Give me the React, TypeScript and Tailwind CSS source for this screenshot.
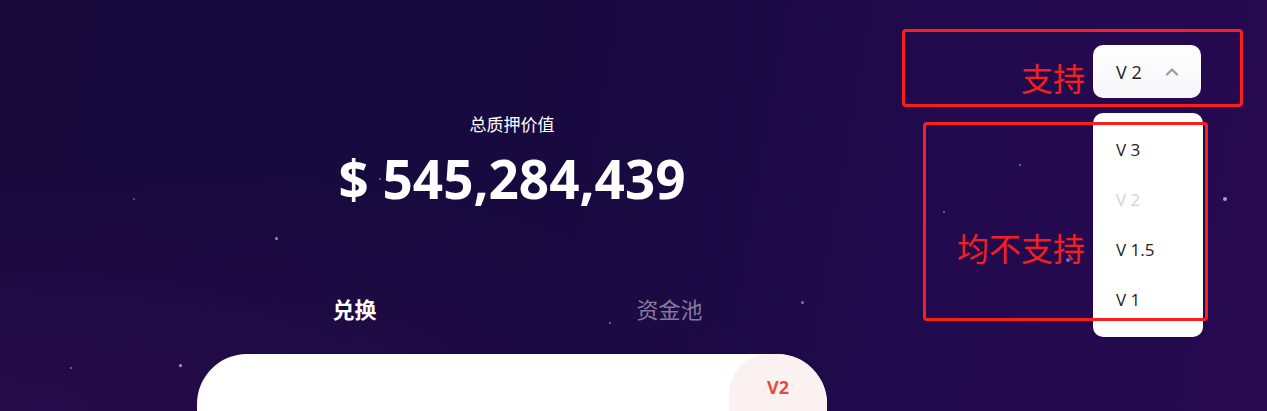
import { ChevronUp } from 'lucide-react';

const stars = [
  { x: 133, y: 198, s: 2, c: 'bg-fuchsia-400/60' },
  { x: 275, y: 237, s: 3, c: 'bg-fuchsia-300/70' },
  { x: 379, y: 178, s: 2, c: 'bg-fuchsia-400/70' },
  { x: 179, y: 364, s: 3, c: 'bg-purple-200/70' },
  { x: 70, y: 367, s: 2, c: 'bg-fuchsia-400/70' },
  { x: 1019, y: 164, s: 2, c: 'bg-fuchsia-400/70' },
  { x: 943, y: 211, s: 2, c: 'bg-fuchsia-400/70' },
  { x: 1066, y: 258, s: 4, c: 'bg-indigo-400/80' },
  { x: 1223, y: 197, s: 4, c: 'bg-purple-200/70' },
  { x: 801, y: 301, s: 3, c: 'bg-fuchsia-400/70' },
  { x: 609, y: 322, s: 2, c: 'bg-fuchsia-400/70' },
];

const versions = [
  { label: 'V 3', disabled: false },
  { label: 'V 2', disabled: true },
  { label: 'V 1.5', disabled: false },
  { label: 'V 1', disabled: false },
];

export default function App() {
  return (
    <div
      className="relative flex h-[411px] w-full overflow-hidden bg-[linear-gradient(100deg,#170a3b_0%,#180a40_45%,#220a4e_75%,#27094f_100%)]"
      style={{ fontFamily: '"Open Sans", "Noto Sans CJK SC", sans-serif' }}
    >
      {/* bottom-left glow */}
      <div className="pointer-events-none absolute inset-0 bg-[radial-gradient(ellipse_at_0%_100%,rgba(45,12,80,0.7)_0%,rgba(45,12,80,0)_45%)]" />

      {stars.map((st, i) => (
        <span
          key={i}
          className={`absolute rounded-full ${st.c}`}
          style={{ left: st.x, top: st.y, width: st.s, height: st.s }}
        />
      ))}

      {/* main column */}
      <div className="relative flex w-[1024px] shrink-0 flex-col items-center pt-[112px]">
        <div className="text-[17px] leading-[24px] text-white" style={{ fontFamily: '"Noto Sans CJK SC", sans-serif' }}>
          总质押价值
        </div>
        <div className="mt-[13px] text-[53px] font-bold leading-[60px] text-white">
          $ 545,284,439
        </div>

        <div className="mt-[85px] grid w-[630px] grid-cols-2 text-[22px] leading-[28px]" style={{ fontFamily: '"Noto Sans CJK SC", sans-serif' }}>
          <div className="text-center font-bold text-white">兑换</div>
          <div className="text-center text-[#857a9c]">资金池</div>
        </div>

        <div className="relative mt-[32px] h-[80px] w-[630px] overflow-hidden rounded-t-[50px] bg-white">
          <div className="absolute right-0 top-0 flex h-[80px] w-[98px] justify-center rounded-tl-[40px] bg-[#fbf1f1] pt-[20px]">
            <span className="text-[18px] font-bold leading-[26px] text-[#ea4a3e]">V2</span>
          </div>
        </div>
      </div>

      {/* right: version selector */}
      <div className="relative flex-1">
        <div className="ml-[69px] mt-[45px] flex h-[53px] w-[108px] items-center justify-between rounded-[10px] bg-gradient-to-b from-white to-[#f6f6f9] pl-[23px] pr-[19px]">
          <span className="text-[18px] leading-none text-[#222]">V 2</span>
          <ChevronUp size={20} strokeWidth={2.6} className="text-[#9a9a9a]" />
        </div>

        <div className="absolute left-[69px] top-[113px] w-[110px] rounded-[10px] bg-white py-[12px] shadow-sm">
          {versions.map((v) => (
            <div
              key={v.label}
              className={`flex h-[50px] items-center pl-[23px] text-[17px] ${v.disabled ? 'text-[#d2d2d6]' : 'text-[#222]'}`}
            >
              {v.label}
            </div>
          ))}
        </div>
      </div>

      {/* annotation: 支持 */}
      <div className="absolute left-[902px] top-[29px] h-[78px] w-[341px] rounded-[4px] border-[3px] border-[#fa1e1e] pl-[116px] pt-[29px]">
        <span className="block text-[32px] leading-none text-[#f51f1f]" style={{ fontFamily: '"Noto Sans CJK SC", sans-serif' }}>
          支持
        </span>
      </div>

      {/* annotation: 均不支持 */}
      <div className="absolute left-[923px] top-[122px] h-[199px] w-[285px] rounded-[4px] border-[3px] border-[#fa1e1e] pl-[31px] pt-[106px]">
        <span className="block text-[32px] leading-none text-[#f51f1f]" style={{ fontFamily: '"Noto Sans CJK SC", sans-serif' }}>
          均不支持
        </span>
      </div>
    </div>
  );
}
